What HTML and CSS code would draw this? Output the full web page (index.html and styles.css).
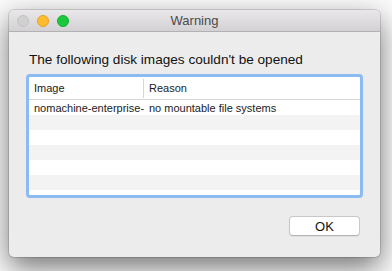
FILE: index.html
```html
<!DOCTYPE html>
<html lang="en">
<head>
    <meta charset="UTF-8">
    <meta name="viewport" content="width=device-width, initial-scale=1.0">
    <title>Warning</title>
    <link rel="stylesheet" href="styles.css">
</head>
<body>
    <div class="window">
        <div class="titlebar">
            <div class="lights">
                <span class="light light-close"></span>
                <span class="light light-min"></span>
                <span class="light light-max"></span>
            </div>
            <div class="title">Warning</div>
            <div></div>
        </div>
        <div class="content">
            <div class="message">The following disk images couldn't be opened</div>
            <div class="table">
                <div class="row head">
                    <div class="cell col-image">Image</div>
                    <div class="cell col-reason">Reason</div>
                </div>
                <div class="row">
                    <div class="cell col-image">nomachine-enterprise-</div>
                    <div class="cell col-reason">no mountable file systems</div>
                </div>
                <div class="row stripe"></div>
                <div class="row"></div>
                <div class="row stripe"></div>
                <div class="row"></div>
                <div class="row stripe"></div>
            </div>
            <div class="actions">
                <button class="ok-btn">OK</button>
            </div>
        </div>
    </div>
</body>
</html>
```

FILE: styles.css
```css
:root {
    --window-bg: #ececec;
    --focus-ring: #8cbbf3;
    --stripe: #f3f3f3;
    --grid-line: #d6d6d6;
}
* { box-sizing: border-box; }
body {
    margin: 0;
    padding: 10px 0 0 9px;
    width: 392px;
    height: 271px;
    overflow: hidden;
    background: #fafafa;
    font-family: 'Liberation Sans', Arial, sans-serif;
    color: #1b1b1b;
}
.window {
    width: 371px;
    height: 247px;
    background: var(--window-bg);
    border-radius: 5px;
    overflow: hidden;
    box-shadow: 0 0 0 1px rgba(0, 0, 0, 0.13), 0 10px 28px rgba(0, 0, 0, 0.55);
}
.titlebar {
    height: 22px;
    display: grid;
    grid-template-columns: 1fr auto 1fr;
    align-items: center;
    background: linear-gradient(#e9e7e9, #d3d1d3);
    border-bottom: 1px solid #b3b1b3;
}
.lights {
    display: flex;
    gap: 8px;
    padding-left: 8px;
}
.light {
    width: 12px;
    height: 12px;
    border-radius: 50%;
}
.light-close {
    background: #d0d0d0;
    border: 1px solid #c2c2c2;
}
.light-min {
    background: #fdbb2d;
    border: 1px solid #e1a325;
}
.light-max {
    background: #19c83c;
    border: 1px solid #14ae30;
}
.title {
    font-size: 13px;
    color: #4a4a4a;
}
.content {
    padding: 20px 0 0 17px;
}
.message {
    font-size: 13.6px;
    line-height: 16px;
    padding-left: 3px;
    margin-bottom: 6px;
    color: #111;
}
.table {
    width: 337px;
    height: 124px;
    border: 3px solid var(--focus-ring);
    border-radius: 4px;
    background: #fff;
    overflow: hidden;
}
.row {
    height: 15px;
    display: flex;
    align-items: center;
    font-size: 11px;
    color: #1b1b1b;
}
.row.head {
    height: 23px;
    border-bottom: 1px solid var(--grid-line);
}
.row.stripe {
    background: var(--stripe);
}
.cell {
    padding: 0 5px;
    white-space: nowrap;
}
.col-image {
    width: 115px;
    flex: none;
}
.head .col-image {
    border-right: 1px solid var(--grid-line);
    height: 19px;
    line-height: 19px;
}
.head .col-reason {
    line-height: 19px;
}
.actions {
    display: flex;
    justify-content: flex-end;
    padding-right: 20px;
    margin-top: 18px;
}
.ok-btn {
    width: 71px;
    height: 20px;
    padding: 0;
    background: #fff;
    border: 1px solid #c8c8c8;
    border-bottom-color: #b4b4b4;
    border-radius: 4px;
    font-family: 'Liberation Sans', Arial, sans-serif;
    font-size: 13px;
    color: #111;
    box-shadow: 0 1px 1px rgba(0, 0, 0, 0.06);
}
```
